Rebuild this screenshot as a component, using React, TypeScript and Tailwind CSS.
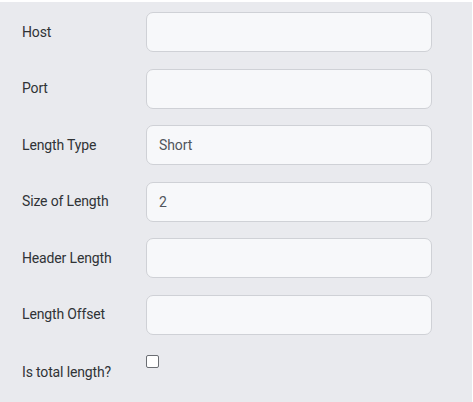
import React from "react";

const rows: { label: string; value: string }[] = [
  { label: "Host", value: "" },
  { label: "Port", value: "" },
  { label: "Length Type", value: "Short" },
  { label: "Size of Length", value: "2" },
  { label: "Header Length", value: "" },
  { label: "Length Offset", value: "" },
];

export default function App() {
  return (
    <div className="min-h-[402px] w-[473px] bg-white pt-[2px] pr-[1px]" style={{ fontFamily: "Roboto, 'Liberation Sans', sans-serif" }}>
      <div className="h-[400px] bg-[#e9eaee] pt-[10px] pl-[22px]">
        <div className="flex flex-col gap-[16.6px]">
          {rows.map((r) => (
            <div key={r.label} className="flex items-center h-[40px]">
              <div className="w-[124px] text-[14px] tracking-[-0.15px] text-[#303336]">{r.label}</div>
              <input
                readOnly
                value={r.value}
                className="h-[40px] w-[286px] rounded-[7px] border border-[#cfd1d6] bg-[#f7f8fa] px-[12px] text-[14px] tracking-[-0.1px] text-[#50555c] outline-none"
              />
            </div>
          ))}
          <div className="flex h-[40px]">
            <div className="w-[124px] self-center pt-[1px] text-[14px] tracking-[-0.15px] text-[#303336]">Is total length?</div>
            <div className="mt-[3px] h-[13px] w-[13px] rounded-[2px] border border-[#6b6e73] bg-white" />
          </div>
        </div>
      </div>
    </div>
  );
}
